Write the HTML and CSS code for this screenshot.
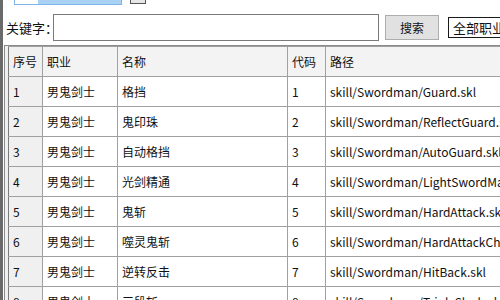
FILE: index.html
```html
<!DOCTYPE html>
<html lang="zh-CN">
<head>
    <meta charset="UTF-8">
    <title>技能查询</title>
    <link rel="stylesheet" href="styles.css">
</head>
<body>
    <div class="window">
        <div class="top-strip">
            <div class="tab-box"><span class="tab-white"></span></div>
            <div class="check-box"></div>
        </div>

        <div class="search-row">
            <label class="search-label">关键字：</label>
            <input class="search-input" type="text">
            <button class="search-button">搜索</button>
            <div class="job-select">全部职业</div>
        </div>

        <div class="grid-frame">
            <table class="grid">
                <colgroup>
                    <col class="c-no">
                    <col class="c-job">
                    <col class="c-name">
                    <col class="c-code">
                    <col class="c-path">
                </colgroup>
                <thead>
                    <tr>
                        <th class="row-head">序号</th>
                        <th>职业</th>
                        <th>名称</th>
                        <th>代码</th>
                        <th>路径</th>
                    </tr>
                </thead>
                <tbody>
                    <tr><td class="row-head">1</td><td>男鬼剑士</td><td>格挡</td><td>1</td><td>skill/Swordman/Guard.skl</td></tr>
                    <tr><td class="row-head">2</td><td>男鬼剑士</td><td>鬼印珠</td><td>2</td><td>skill/Swordman/ReflectGuard.skl</td></tr>
                    <tr><td class="row-head">3</td><td>男鬼剑士</td><td>自动格挡</td><td>3</td><td>skill/Swordman/AutoGuard.skl</td></tr>
                    <tr><td class="row-head">4</td><td>男鬼剑士</td><td>光剑精通</td><td>4</td><td>skill/Swordman/LightSwordMastery.skl</td></tr>
                    <tr><td class="row-head">5</td><td>男鬼剑士</td><td>鬼斩</td><td>5</td><td>skill/Swordman/HardAttack.skl</td></tr>
                    <tr><td class="row-head">6</td><td>男鬼剑士</td><td>噬灵鬼斩</td><td>6</td><td>skill/Swordman/HardAttackChange.skl</td></tr>
                    <tr><td class="row-head">7</td><td>男鬼剑士</td><td>逆转反击</td><td>7</td><td>skill/Swordman/HitBack.skl</td></tr>
                    <tr><td class="row-head">8</td><td>男鬼剑士</td><td>三段斩</td><td>8</td><td>skill/Swordman/TripleSlash.skl</td></tr>
                </tbody>
            </table>
        </div>
    </div>
</body>
</html>
```

FILE: styles.css
```css
* {
    margin: 0;
    padding: 0;
    box-sizing: border-box;
}

body {
    font-family: "Noto Sans CJK SC", sans-serif;
    font-size: 12px;
    color: #111;
    background: #fff;
    width: 500px;
    height: 300px;
    overflow: hidden;
}

.window {
    display: flex;
    flex-direction: column;
    height: 300px;
    border-left: 3px solid #6a6a6a;
}

.top-strip {
    height: 14px;
    flex-shrink: 0;
    display: flex;
    align-items: flex-start;
    gap: 8px;
    padding-left: 11px;
}

.tab-box {
    width: 108px;
    height: 5px;
    background: #a9d1f4;
    border: 1px solid #7eb4ea;
    border-top: none;
}

.tab-white {
    display: block;
    width: 23px;
    height: 4px;
    background: #fff;
}

.check-box {
    width: 16px;
    height: 4px;
    background: #e6e6e6;
    border: 1px solid #555;
    border-top: none;
}

.search-row {
    height: 31px;
    flex-shrink: 0;
    display: flex;
    align-items: flex-start;
    padding-left: 3px;
}

.search-label {
    flex-shrink: 0;
    width: 47px;
    font-size: 13px;
    line-height: 27px;
    white-space: nowrap;
}

.search-input {
    flex-shrink: 0;
    width: 326px;
    height: 27px;
    border: 1px solid #7a7a7a;
    background: #fff;
    outline: none;
}

.search-button {
    flex-shrink: 0;
    margin-left: 6px;
    margin-top: 1px;
    width: 54px;
    height: 25px;
    background: #e1e1e1;
    border: 1px solid #adadad;
    font-family: inherit;
    font-size: 12px;
    color: #111;
}

.job-select {
    flex-shrink: 0;
    margin-left: 9px;
    margin-top: 3px;
    width: 70px;
    height: 21px;
    border: 1px solid #1a1a1a;
    font-size: 13px;
    line-height: 19px;
    padding-left: 4px;
    white-space: nowrap;
}

.grid-frame {
    flex: 1;
    margin-left: 1px;
    padding-left: 3px;
    border-left: 1px solid #8a8a8a;
    border-top: 1px solid #8a8a8a;
    background: #f0f0f0;
    overflow: hidden;
}

.grid {
    border-collapse: collapse;
    table-layout: fixed;
    width: 560px;
    background: #fff;
}

.c-no { width: 34px; }
.c-job { width: 75px; }
.c-name { width: 170px; }
.c-code { width: 38px; }
.c-path { width: 243px; }

.grid th,
.grid td {
    height: 30px;
    border: 1px solid #a0a0a0;
    padding: 0 4px;
    text-align: left;
    font-weight: normal;
    font-size: 12px;
    white-space: nowrap;
    overflow: hidden;
}

.grid th {
    background: #f3f3f3;
}

.grid .row-head {
    background: #f0f0f0;
    border-left: 1px solid #7a7a7a;
}
```
